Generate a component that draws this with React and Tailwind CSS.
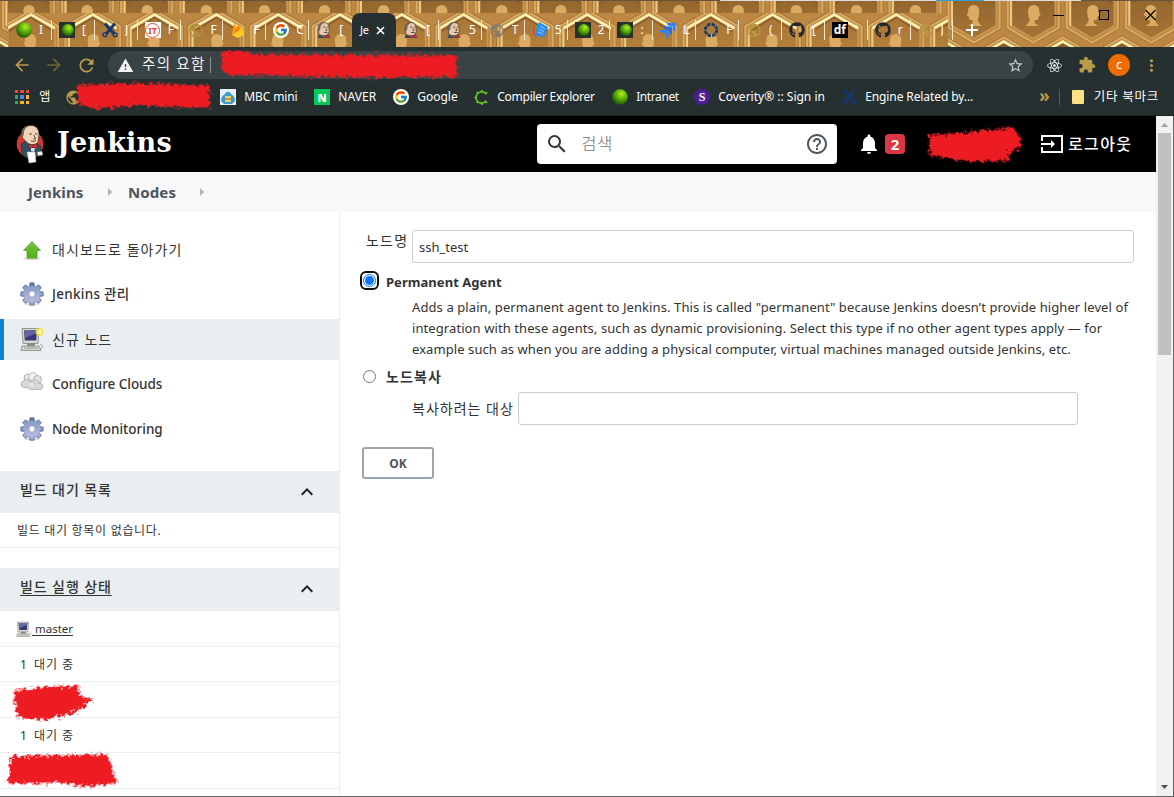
import React from "react";
import { FaGithub, FaReact } from "react-icons/fa";
import { FcGoogle } from "react-icons/fc";
import {
  MdArrowBack, MdArrowForward, MdRefresh, MdWarning, MdStarBorder, MdMoreVert, MdExtension,
  MdSearch, MdHelpOutline, MdNotifications, MdPublic, MdKeyboardArrowUp,
} from "react-icons/md";

const hexRow = (start, pitch, count) => Array.from({ length: count }, (_, i) => start + i * pitch);

function Hex({ x, y, r, fill, person = true, flip }) {
  const w = r * 0.866;
  const pts = `${x},${y - r} ${x + w},${y - r / 2} ${x + w},${y + r / 2} ${x},${y + r} ${x - w},${y + r / 2} ${x - w},${y - r / 2}`;
  return (
    <g>
      <polygon points={pts} fill="none" stroke="#a87739" strokeWidth="11" />
      <polygon points={pts} fill="none" stroke="#d9ab62" strokeWidth="9" />
      <polygon points={pts} fill={fill} stroke="#bd8843" strokeWidth="5" />
      <polygon points={pts} fill={fill} stroke="#c99a54" strokeWidth="1.5" />
      <path d={`M${x - w},${y - r / 2} L${x},${y - r} L${x + w},${y - r / 2}`} fill="none" stroke="#fff0b4" strokeWidth="2.6" />
      <path d={`M${x - w},${y - r / 2} V${y + r / 2}`} stroke="#eccb86" strokeWidth="2" />
      <path d={`M${x - w + 2},${y - r / 2 + 3} L${x},${y - r + 3} L${x + w - 2},${y - r / 2 + 3}`} fill="none" stroke="#85592a" strokeWidth="1.2" />
      {person && (
        <g fill="#dcab62" transform={flip ? `translate(${2 * x} 0) scale(-1 1)` : undefined}>
          <path d={`M${x - 5},${y} q-1,-8 6,-8 q6,1 5,7 l1.500,3 -2,1.500 -1,3.500 -3,0 0,3 4,3 h-13 q4,-4 4,-7 q-1.500,-2 -1.500,-6z`} />
        </g>
      )}
    </g>
  );
}

function ThemeArt() {
  return (
    <svg className="absolute inset-0" width="1174" height="47" viewBox="0 0 1174 47" aria-hidden="true">
      <defs>
        <clipPath id="tabs"><rect x="8" y="13" width="940" height="34" /></clipPath>
        <linearGradient id="gold" x1="0" y1="0" x2="0" y2="1">
          <stop offset="0" stopColor="#8d622c" /><stop offset="1" stopColor="#a67437" />
        </linearGradient>
        <linearGradient id="paleGold" x1="0" y1="0" x2="0" y2="1">
          <stop offset="0" stopColor="#a87536" /><stop offset="1" stopColor="#bb853f" />
        </linearGradient>
      </defs>
      <rect width="1174" height="47" fill="#bd8843" />
      {hexRow(-1, 59.1, 21).map((x) => <Hex key={x} x={x} y={67} r={25.5} fill="url(#gold)" person={false} />)}
      {hexRow(28.5, 59.1, 20).map((x, i) => <Hex key={x} x={x} y={13} r={25.5} fill="url(#gold)" flip={i % 3 === 1} />)}
      <g clipPath="url(#tabs)">
        <rect x="8" y="13" width="940" height="34" fill="#bd8843" />
        {hexRow(31, 61.8, 16).map((x, i) => <Hex key={x} x={x} y={42} r={27.5} fill="url(#paleGold)" flip={i % 2 === 0} />)}
      </g>
      <rect width="1174" height="1" fill="#69533b" />
      <rect x="720" width="216" height="1" fill="#ddd" />
      <rect x="936" width="48" height="1" fill="#2f9fd8" />
      <rect x="984" width="97" height="1" fill="#ddd" />
    </svg>
  );
}

function Ball({ size = 16, boxed }) {
  return (
    <svg width={size} height={size} viewBox="0 0 16 16">
      <defs>
        <radialGradient id="ball" cx=".6" cy=".3" r=".75">
          <stop offset="0" stopColor="#b4ee20" /><stop offset=".4" stopColor="#62b90b" /><stop offset="1" stopColor="#154a04" />
        </radialGradient>
      </defs>
      {boxed && <rect width="16" height="16" fill="#27302f" />}
      <circle cx={boxed ? 8.7 : 8} cy="8" r={boxed ? 6 : 7.8} fill="url(#ball)" />
    </svg>
  );
}

function Scissors() {
  return (
    <svg width="16" height="16" viewBox="0 0 16 16" fill="none" stroke="#12366e">
      <path d="M3 1.5 L12 12 M13 1.5 L4 12" strokeWidth="2.8" />
      <circle cx="2.8" cy="12.8" r="1.9" strokeWidth="1.3" /><circle cx="13.2" cy="12.8" r="1.9" strokeWidth="1.3" />
    </svg>
  );
}

function Butler() {
  return (
    <svg width="16" height="16" viewBox="0 0 16 16">
      <path d="M1.500 16l1.500-4 5 1 4-1 2.500 4z" fill="#374c5c" />
      <path d="M3 12.500Q1.800 8 2.200 5 Q3 .5 8 .5 Q13.500 .8 13 6 L13.300 9.500 L11.500 13 7 14z" fill="#e7c8ac" stroke="#4b4038" strokeWidth=".8" />
      <path d="M1.800 7.500Q1.500 1 8 .6 Q4 3 4.300 7 L3 9.500z" fill="#6a6461" />
      <path d="M7.200 5h2M10.800 5h1.500M9.800 6l1.200 2.500-1.500.3M8 10.500h3.500" stroke="#5b4037" fill="none" strokeWidth=".9" />
      <path d="M7 13.500l3 .8 3.500-1.300v3L10 15l-3 1z" fill="#d22c2c" />
    </svg>
  );
}

function Prism() {
  return (
    <svg width="16" height="16" viewBox="0 0 16 16">
      <path d="M1 5l4-2-1 11-3-1z" fill="#e8463c" /><path d="M3 4l4-2-1 12-3 0z" fill="#38b35a" />
      <path d="M7 0l9 5-4 10-9-1z" fill="#2a8cf4" /><path d="M8 4l5 3M7 7l5 3M6 10l5 2" stroke="#9ed0ff" strokeWidth=".9" />
    </svg>
  );
}

function Chevrons() {
  return (
    <svg width="16" height="16" viewBox="0 0 16 16">
      <path d="M7 1h8.500v8.500q-3-.5-3-3.500V4H10Q7 4 7 1z" fill="#2684ff" />
      <path d="M3.500 4.500H12V13q-3-.5-3-3.500v-2H6.500q-3 0-3-3z" fill="#1f74ec" />
      <path d="M0 8h8.500v8.500q-3-.5-3-3.500v-2H3Q0 11 0 8z" fill="#2684ff" />
    </svg>
  );
}

function Flame() {
  return (
    <svg width="16" height="16" viewBox="0 0 16 16">
      <path d="M2 13L4.3 1.5 7 5.5 8.5 3l1.5 3L12 4l2 9-6 3z" fill="#ffca28" />
      <path d="M2 13L4.3 1.5 7 5.5z" fill="#ffa000" /><path d="M2 13L8.5 3l2 4z" fill="#f57c00" />
    </svg>
  );
}

function RoundIT() {
  return (
    <span className="flex size-4 items-center justify-center bg-white">
      <span className="flex size-[15px] items-center justify-center rounded-full border border-[#e5492b] text-[9px] leading-none font-bold text-[#e5492b]">IT</span>
    </span>
  );
}

function Ring({ color }) {
  return (
    <svg width="16" height="16" viewBox="0 0 16 16" fill="none" stroke={color}>
      <circle cx="8" cy="8" r="6" strokeWidth="2.4" strokeDasharray="3.3 1.41" />
      <circle cx="8" cy="8" r="5" strokeWidth="1" strokeDasharray="6 1.85" />
    </svg>
  );
}

function GearC() {
  return (
    <svg width="15" height="15" viewBox="0 0 16 16" fill="none" stroke="#67c52a">
      <path d="M13 4.500A6 6 0 1 0 13 11.500" strokeWidth="1.8" />
      <path d="M8.500 0v2M8.500 14v2M.500 8h2M2.800 2.300l1.300 1.300M2.800 13.700l1.300-1.300M12.500 3.800l1.500-1.500M12.500 12.200l1.500 1.500" strokeWidth="1.700" />
    </svg>
  );
}

const Df = () => <span className="flex size-4 items-center justify-center bg-black text-[12px] leading-none font-bold text-white">df</span>;
const Globe = ({ c }) => <MdPublic size={17} color={c} />;

const tabs = [
  [<Ball />, "I"], [<Ball boxed />, "["], [<Scissors />, "J"], [<RoundIT />, "F"], [<Globe c="#b18e3c" />, "F"],
  [<Flame />, "F"], [<FcGoogle size={16} className="rounded-full bg-white p-px" />, "C"], [<Butler />, "["], null,
  [<Butler />, "["], [<Butler />, "5"], [<Globe c="#857c6e" />, "T"], [<Prism />, "5"], [<Ball boxed />, "2"],
  [<Ball boxed />, ":"], [<Chevrons />, "L"], [<Ring color="#173d68" />, "F"], [<Globe c="#b99640" />, "("],
  [<FaGithub size={16} color="#24292e" />, "["], [<Df />, "'"], [<FaGithub size={16} color="#24292e" />, "r"], [<Globe c="#b99640" />, "J"],
];

function TabStrip() {
  return (
    <div className="relative flex h-[47px] shrink-0 overflow-hidden">
      <ThemeArt />
      <div className="relative flex pt-[13px] pl-[9px]">
        {tabs.map((t, i) =>
          t ? (
            <div key={i} className="flex h-[34px] w-[42.88px] items-center pl-[7px]">
              <span className="flex size-4 shrink-0 items-center justify-center">{t[0]}</span>
              <span className="ml-[7px] w-[8px] overflow-hidden text-[12px] text-white">{t[1]}</span>
              <span className={`ml-auto h-5 w-px ${i === 7 ? "bg-transparent" : "bg-[#f6e9cb]"}`} />
            </div>
          ) : (
            <div key={i} className="flex h-[34px] w-[44px] items-center rounded-t-[8px] bg-[#263030] pl-[8px]">
              <span className="w-[10px] text-[11px] tracking-[-0.3px] text-white">Je</span>
              <svg className="ml-[6px]" width="9" height="9" viewBox="0 0 9 9"><path d="M1 1l7 7M8 1L1 8" stroke="#fff" strokeWidth="1.7" /></svg>
            </div>
          ),
        )}
      </div>
      <svg className="relative mt-[23px] ml-[12px]" width="14" height="14" viewBox="0 0 14 14"><path d="M7 1v12M1 7h12" stroke="#fff" strokeWidth="2" /></svg>
      <div className="relative mt-[9px] mr-[18px] ml-auto flex gap-[35px]">
        <svg width="11" height="12"><path d="M0 6.5h11" stroke="#000" /></svg>
        <svg width="11" height="12"><rect x=".5" y="1.5" width="9" height="9" fill="none" stroke="#000" /></svg>
        <svg width="11" height="12"><path d="M.5 1l10 10M10.5 1l-10 10" stroke="#000" strokeWidth="1.1" /></svg>
      </div>
    </div>
  );
}

function Scribble({ w, h, points, className, seed = 2 }) {
  return (
    <svg width={w} height={h} className={`overflow-visible ${className}`} aria-hidden="true">
      <defs>
        <filter id={`rough${seed}`} x="-10%" y="-20%" width="120%" height="140%">
          <feTurbulence type="fractalNoise" baseFrequency=".28" numOctaves="2" seed={seed} />
          <feDisplacementMap in="SourceGraphic" scale="9" />
          <feGaussianBlur stdDeviation=".7" />
        </filter>
      </defs>
      <polygon points={points} fill="#ed1c24" stroke="#ed1c24" strokeOpacity=".45" strokeWidth="3" filter={`url(#rough${seed})`} />
    </svg>
  );
}

function Toolbar() {
  return (
    <div className="flex h-[36px] shrink-0 items-center bg-[#263030]">
      <MdArrowBack size={20} color="#b99b4b" className="ml-[12px]" />
      <MdArrowForward size={20} color="#6d623b" className="ml-[12px]" />
      <MdRefresh size={21} color="#b99b4b" className="ml-[12px]" />
      <div className="relative ml-[11px] flex h-[28px] w-[925px] items-center rounded-full bg-[#394244] pl-[9px]">
        <MdWarning size={17} color="#f1f1f1" />
        <span className="mb-[2px] ml-[8px] w-[60px] text-[14.5px] tracking-[1.3px] whitespace-nowrap text-[#f1f1f1]">주의 요함</span>
        <span className="ml-[8px] h-4 w-px bg-[#8b9192]" />
        <Scribble w={238} h={28} seed={3} className="absolute top-0 left-[113px]" points="2,1 27,1 30,4 235,5 235,25 150,26 8,23 2,20" />
        <MdStarBorder size={17} color="#c9cccc" className="mr-[9px] ml-auto" />
      </div>
      <FaReact size={15} color="#fff" className="ml-[14px]" />
      <MdExtension size={18} color="#b99b4b" className="ml-[16px]" />
      <span className="ml-[12px] flex size-[22px] items-center justify-center rounded-full bg-[#ef6c00] pb-px text-[13px] leading-none text-white">c</span>
      <MdMoreVert size={19} color="#b99b4b" className="ml-[12px]" />
    </div>
  );
}

function Mark({ icon, children, className }) {
  return (
    <span className={`flex items-center gap-[8px] whitespace-nowrap ${className}`}>
      <span className="flex size-4 shrink-0 items-center justify-center">{icon}</span>
      <span>{children}</span>
    </span>
  );
}

function AppsGrid() {
  const c = ["#ee4b3e", "#ee4b3e", "#ee4b3e", "#3aa757", "#4688f1", "#f7b529", "#3aa757", "#f7b529", "#f7b529"];
  return <span className="grid grid-cols-3 gap-[2px]">{c.map((v, i) => <i key={i} className="size-[3.4px]" style={{ background: v }} />)}</span>;
}

function Bookmarks() {
  return (
    <div className="relative flex h-[33px] shrink-0 items-center border-b border-[#1b2323] bg-[#263030] pb-[4px] text-[12px] text-white">
      <span className="ml-[15px]"><AppsGrid /></span>
      <span className="ml-[10px] w-[13px] text-[12px]">앱</span>
      <span className="ml-[13px]"><Globe c="#b99b4b" /></span>
      <Scribble w={136} h={25} seed={5} className="absolute top-0 left-[75px]" points="3,3 60,1 134,3 134,24 60,22 20,25 4,21" />
      <Mark className="ml-[138px] w-[94px] tracking-[-0.1px]" icon={
        <svg width="16" height="16" viewBox="0 0 16 16"><rect width="16" height="16" fill="#e6f3fa" /><path d="M1 12Q1 7 4 6 8-1 12 6q3 1 3 6l-3 3H4z" fill="#3d9cc9" /><rect x="5" y="7" width="6" height="6" rx="1" fill="#f6ce70" /><path d="M5 10h6" stroke="#8b6235" /></svg>}>MBC mini</Mark>
      <Mark className="w-[79px] tracking-[0.1px]" icon={<span className="flex size-4 items-center justify-center bg-[#05c75a] text-[11px] leading-none font-black">N</span>}>NAVER</Mark>
      <Mark className="w-[80px]" icon={<FcGoogle size={16} className="rounded-full bg-white p-px" />}>Google</Mark>
      <Mark className="w-[139px] tracking-[-0.24px]" icon={<GearC />}>Compiler Explorer</Mark>
      <Mark className="w-[82px] tracking-[-0.4px]" icon={<Ball />}>Intranet</Mark>
      <Mark className="w-[147px]" icon={<span className="flex size-4 items-center justify-center rounded-full bg-[#4c1d95] font-['Liberation_Serif',serif] text-[12px] leading-none font-bold">S</span>}>Coverity® :: Sign in</Mark>
      <Mark className="tracking-[-0.1px]" icon={<Scissors />}>Engine Related by...</Mark>
      <span className="mr-[9px] mb-[3px] ml-auto text-[17px] leading-none font-bold text-[#b99b4b]">»</span>
      <span className="mr-[12px] h-4 w-px bg-[#5a5b45]" />
      <span className="mr-[10px] h-[14px] w-[12px] rounded-[1px] bg-[#ffe082]" />
      <span className="mr-[15px] text-[12.5px] tracking-[0.75px] whitespace-nowrap">기타 북마크</span>
    </div>
  );
}

function JenkinsLogo() {
  return (
    <svg width="28" height="40" viewBox="0 0 28 40">
      <circle cx="14" cy="20" r="13.3" fill="#d33833" />
      <path d="M5 20l5-3 9 2 6 3-1 9-7 4-8-2-3-4z" fill="#335061" stroke="#1b2a33" strokeWidth=".6" />
      <path d="M6.500 14Q4 4 13 1.500q10-1 10 9l-1 8q-5 4-10 1z" fill="#f0d6b7" stroke="#3b3330" strokeWidth=".8" />
      <path d="M6 14Q3 3 13 1.500 8 4 8 9l-1 4z" fill="#6b6661" />
      <path d="M13 10h3M19 10h2.500M18 11l1.500 4h-2M15 17q3 1 5-.5" stroke="#4d3b33" fill="none" strokeWidth=".9" />
      <path d="M13 20l4 1.500 4-2v5l-4-1.500-4 1.500z" fill="#d33833" stroke="#7a1712" strokeWidth=".5" />
      <path d="M15 24l4 0-1 4-3-1z" fill="#d9dfe3" />
      <path d="M11 28l8 0 1 10-7 1z" fill="#fff" stroke="#aaa" strokeWidth=".5" />
      <path d="M21 28l5-1 1 4-5 1z" fill="#f2f2f2" stroke="#555" strokeWidth=".5" />
    </svg>
  );
}

function Header() {
  return (
    <header className="flex h-[56px] shrink-0 items-center bg-black">
      <span className="ml-[16px]"><JenkinsLogo /></span>
      <span className="mb-[3px] ml-[13px] w-[479px] font-['DejaVu_Serif',serif] text-[27px] leading-none font-bold tracking-[0.2px] text-white">Jenkins</span>
      <div className="ml-px flex h-[40px] w-[300px] items-center rounded-[4px] bg-white">
        <MdSearch size={24} color="#333" className="ml-[8px]" />
        <span className="ml-[12px] text-[17px] font-light text-[#757575]">검색</span>
        <MdHelpOutline size={24} color="#4d545d" className="mr-[8px] ml-auto" />
      </div>
      <MdNotifications size={24} color="#fff" className="ml-[20px]" />
      <span className="ml-[4px] flex h-[20px] w-[20px] items-center justify-center rounded-[4px] bg-[#dc3545] text-[15px] leading-none font-bold text-white">2</span>
      <Scribble w={94} h={36} seed={8} className="ml-[22px]" points="3,10 50,6 86,2 94,14 92,22 82,26 81,34 45,35 3,29" />
      <svg className="ml-[20px]" width="22" height="18" viewBox="0 0 22 18" fill="none" stroke="#fff" strokeWidth="2">
        <path d="M1 6V1h20v16H1v-5M0 9h12" /><path d="M10 5l4 4-4 4z" fill="#fff" stroke="none" />
      </svg>
      <span className="ml-[5px] text-[16px] font-medium tracking-[1.4px] whitespace-nowrap text-white">로그아웃</span>
    </header>
  );
}

const Caret = () => <svg width="5" height="8" className="-mt-px"><path d="M0 0l4.500 4-4.500 4z" fill="#b5b8bb" /></svg>;

function Gear() {
  return (
    <svg width="24" height="24" viewBox="0 0 24 24">
      <defs><linearGradient id="gear" x1="0" y1="0" x2="0" y2="1"><stop offset="0" stopColor="#8aa0c8" /><stop offset="1" stopColor="#b7b7dc" /></linearGradient></defs>
      <ellipse cx="12" cy="22" rx="8" ry="1.500" fill="#ddd" />
      {[0, 45, 90, 135, 180, 225, 270, 315].map((a) => (
        <path key={a} d="M9.300 6L10 .8h4L14.700 6z" transform={`rotate(${a} 12 12)`} fill={a > 90 && a < 270 ? "#a9abd4" : a === 0 ? "#5c78a8" : "#8a9ec8"} stroke="#5f6f98" strokeWidth=".8" />
      ))}
      <circle cx="12" cy="12" r="5.700" fill="none" stroke="url(#gear)" strokeWidth="5" />
      <circle cx="12" cy="12" r="3.200" fill="#fff" stroke="#7080a8" strokeWidth=".7" />
    </svg>
  );
}

function UpArrow() {
  return (
    <svg width="24" height="24" viewBox="0 0 24 24">
      <defs><linearGradient id="up" x1="0" y1="0" x2="0" y2="1"><stop offset="0" stopColor="#7cc04c" /><stop offset="1" stopColor="#4fb20c" /></linearGradient></defs>
      <ellipse cx="12" cy="20.500" rx="8" ry="1.300" fill="#ccc" />
      <path d="M12 3.500l8.500 9H17V20H7v-7.500H3.500z" fill="url(#up)" stroke="#58963a" strokeWidth=".8" />
    </svg>
  );
}

function Computer({ size = 24, spark }) {
  return (
    <svg width={size} height={size} viewBox="0 0 24 24">
      <path d="M2 1.500h17l-1 15H3z" fill="#dadad2" stroke="#80827b" strokeWidth=".8" />
      <path d="M4 3h13l-.7 10.500H4.800z" fill="#34387a" /><path d="M4 3h13l-.3 3L5 11z" fill="#6468a0" />
      <path d="M7 16h8v3H7z" fill="#8b8c87" /><path d="M2 19h17l2 4.500H1z" fill="#d6d6cf" stroke="#82847d" strokeWidth=".8" />
      <path d="M4 21h14" stroke="#9c9c97" /><path d="M20 17l3 2-2 3" stroke="#a6a7a0" fill="none" />
      {spark && <><circle cx="19.500" cy="5" r="4" fill="#f7e72c" opacity=".75" /><circle cx="19.500" cy="5" r="2" fill="#fffbb8" /></>}
    </svg>
  );
}

function Clouds() {
  return (
    <svg width="24" height="24" viewBox="0 0 24 24" stroke="#a8a8a5" strokeWidth=".8">
      <circle cx="8" cy="6" r="4" fill="#e9e9e7" /><circle cx="13" cy="4.800" r="4.200" fill="#f0f0ee" /><circle cx="17.500" cy="7.500" r="4" fill="#e2e2e0" />
      <path d="M4 15.500q-3-.5-3-3.500t3.500-3.500Q6 6 9 8q1 1 1.500 2.500Q13 7 16.500 8q2.500 1 2.500 3 4 .5 4 3.500t-4 3H11q-2 0-3.500-2z" fill="#d9d9d7" />
      <path d="M9 14.500q-1.500-4 2-4.500 3.500 0 3.500 4 M14.500 12q2-1.500 4 0" fill="#e8e8e6" stroke="#c0c0bd" />
    </svg>
  );
}

const menu = [
  [<UpArrow />, "대시보드로 돌아가기", "text-[14px] tracking-[1.1px]"],
  [<Gear />, "Jenkins 관리", "text-[13.5px] font-medium tracking-[0.28px]"],
  [<Computer spark />, "신규 노드", "text-[14px] tracking-[1px]"],
  [<Clouds />, "Configure Clouds", "text-[13.5px] font-medium tracking-[-0.05px]"],
  [<Gear />, "Node Monitoring", "text-[13.5px] font-medium"],
];

function PaneHead({ children, className, underline }) {
  return (
    <div className={`flex items-start justify-between bg-[#e9eef0] pt-[9px] pr-[20px] pl-[20px] ${className}`}>
      <span className={`text-[14px] leading-[20px] font-medium tracking-[0.9px] text-[#333] ${underline ? "underline underline-offset-[3px]" : ""}`}>{children}</span>
      <MdKeyboardArrowUp size={24} color="#222" />
    </div>
  );
}

const Row = ({ children, className }) => <div className={`flex items-center border-b border-[#e9eef0] text-[12px] ${className}`}>{children}</div>;

function Sidebar() {
  return (
    <aside className="w-[340px] shrink-0 overflow-hidden border-r border-[#e9eef0] pt-[17px] text-[#333]">
      <nav className="flex h-[242px] flex-col gap-[3.9px]">
        {menu.map(([icon, label, cls], i) => (
          <div key={label} className={`flex h-[41px] shrink-0 items-center border-l-4 pl-[16px] ${i === 2 ? "border-[#0b84cf] bg-[#e9eef0]" : "border-transparent"}`}>
            {icon}
            <span className={`ml-[8px] whitespace-nowrap ${cls}`}>{label}</span>
          </div>
        ))}
      </nav>
      <PaneHead className="h-[42px]">빌드 대기 목록</PaneHead>
      <Row className="h-[35px] pt-px pl-[17px] tracking-[0.7px]">빌드 대기 항목이 없습니다.</Row>
      <PaneHead className="mt-[20px] h-[43px]" underline>빌드 실행 상태</PaneHead>
      <Row className="h-[36px] pt-px pl-[16px]">
        <Computer size={16} />
        <span className="text-[11.5px] underline underline-offset-2 whitespace-pre"> master</span>
      </Row>
      <Row className="h-[35px] pt-px pl-[20px] tracking-[0.9px]"><span className="w-[14px]">1</span>대기 중</Row>
      <Row className="h-[36px] pl-[12px]"><Scribble w={80} h={36} seed={12} className="relative top-[2px]" points="2,8 25,4 66,2 67,13 80,15 65,27 35,35 6,33" /></Row>
      <Row className="h-[35px] pt-px pl-[20px] tracking-[0.9px]"><span className="w-[14px]">1</span>대기 중</Row>
      <Row className="h-[36px] pl-[7px]"><Scribble w={108} h={34} seed={14} className="" points="4,3 100,1 109,29 80,32 50,28 2,29" /></Row>
    </aside>
  );
}

function Main() {
  return (
    <main className="flex min-w-0 flex-1 flex-col pt-[18px] pl-[20px] text-[13.5px] text-[#333]">
      <div className="flex">
        <span className="ml-[6px] w-[46px] text-[14px] tracking-[1.2px] whitespace-nowrap">노드명</span>
        <div className="flex h-[33px] w-[722px] items-center rounded-[3px] border border-[#ccc] pt-[2px] pl-[6px] text-[13px]">ssh_test</div>
      </div>
      <div className="mt-[8px] flex h-[20px] items-center">
        <span className="-mt-px flex size-[19px] items-center justify-center rounded-[6px] border-2 border-[#101010] bg-white">
          <span className="flex size-[13px] items-center justify-center rounded-full border border-[#0b75e8]"><span className="size-[9px] rounded-full bg-[#0b75ff]" /></span>
        </span>
        <span className="mt-[3px] ml-[7px] text-[13px] font-bold tracking-[0.05px]">Permanent Agent</span>
      </div>
      <p className="mt-[6px] ml-[52px] text-[13px] leading-[21px] whitespace-nowrap">
        <span className="tracking-[0.095px]">Adds a plain, permanent agent to Jenkins. This is called "permanent" because Jenkins doesn’t provide higher level of</span><br />
        <span className="tracking-[0.085px]">integration with these agents, such as dynamic provisioning. Select this type if no other agent types apply — for</span><br />
        <span className="tracking-[0.08px]">example such as when you are adding a physical computer, virtual machines managed outside Jenkins, etc.</span>
      </p>
      <div className="mt-[6px] flex h-[20px] items-center">
        <span className="ml-[3px] size-[13px] rounded-full border border-[#767676]" />
        <span className="ml-[10px] text-[14px] font-bold tracking-[1.1px]">노드복사</span>
      </div>
      <div className="mt-[6px] ml-[52px] flex items-center">
        <span className="w-[106px] text-[14px] tracking-[1px] whitespace-nowrap">복사하려는 대상</span>
        <div className="h-[33px] w-[560px] rounded-[3px] border border-[#ccc]" />
      </div>
      <button className="mt-[22px] ml-[2px] h-[32px] w-[72px] rounded-[3px] border-2 border-[#9aa5ad] pt-px text-[12px] font-bold text-[#4d545d]">OK</button>
    </main>
  );
}

export default function App() {
  return (
    <div className="flex h-[797px] w-[1174px] flex-col overflow-hidden bg-white font-['Noto_Sans','Noto_Sans_CJK_KR',sans-serif]">
      <TabStrip />
      <Toolbar />
      <Bookmarks />
      <div className="flex min-h-0 flex-1 border-r border-b border-[#666]">
        <div className="flex w-[1156px] flex-col">
          <Header />
          <div className="flex h-[40px] shrink-0 items-center bg-[#f8f8f8] pt-px pl-[28px] text-[15px] font-bold tracking-[0.1px] text-[#4d545d]">
            <span className="w-[80px]">Jenkins</span><Caret />
            <span className="ml-[15px] w-[72px]">Nodes</span><Caret />
          </div>
          <div className="flex min-h-0 flex-1"><Sidebar /><Main /></div>
        </div>
        <div className="flex w-[17px] flex-col items-center bg-[#f1f1f1]">
          <svg className="mt-[7px]" width="7" height="4"><path d="M0 4l3.500-4L7 4z" fill="#a3a3a3" /></svg>
          <span className="mt-[6px] h-[222px] w-[13px] bg-[#c1c1c1]" />
          <svg className="mt-auto mb-[7px]" width="7" height="4"><path d="M0 0h7L3.500 4z" fill="#505050" /></svg>
        </div>
      </div>
    </div>
  );
}
